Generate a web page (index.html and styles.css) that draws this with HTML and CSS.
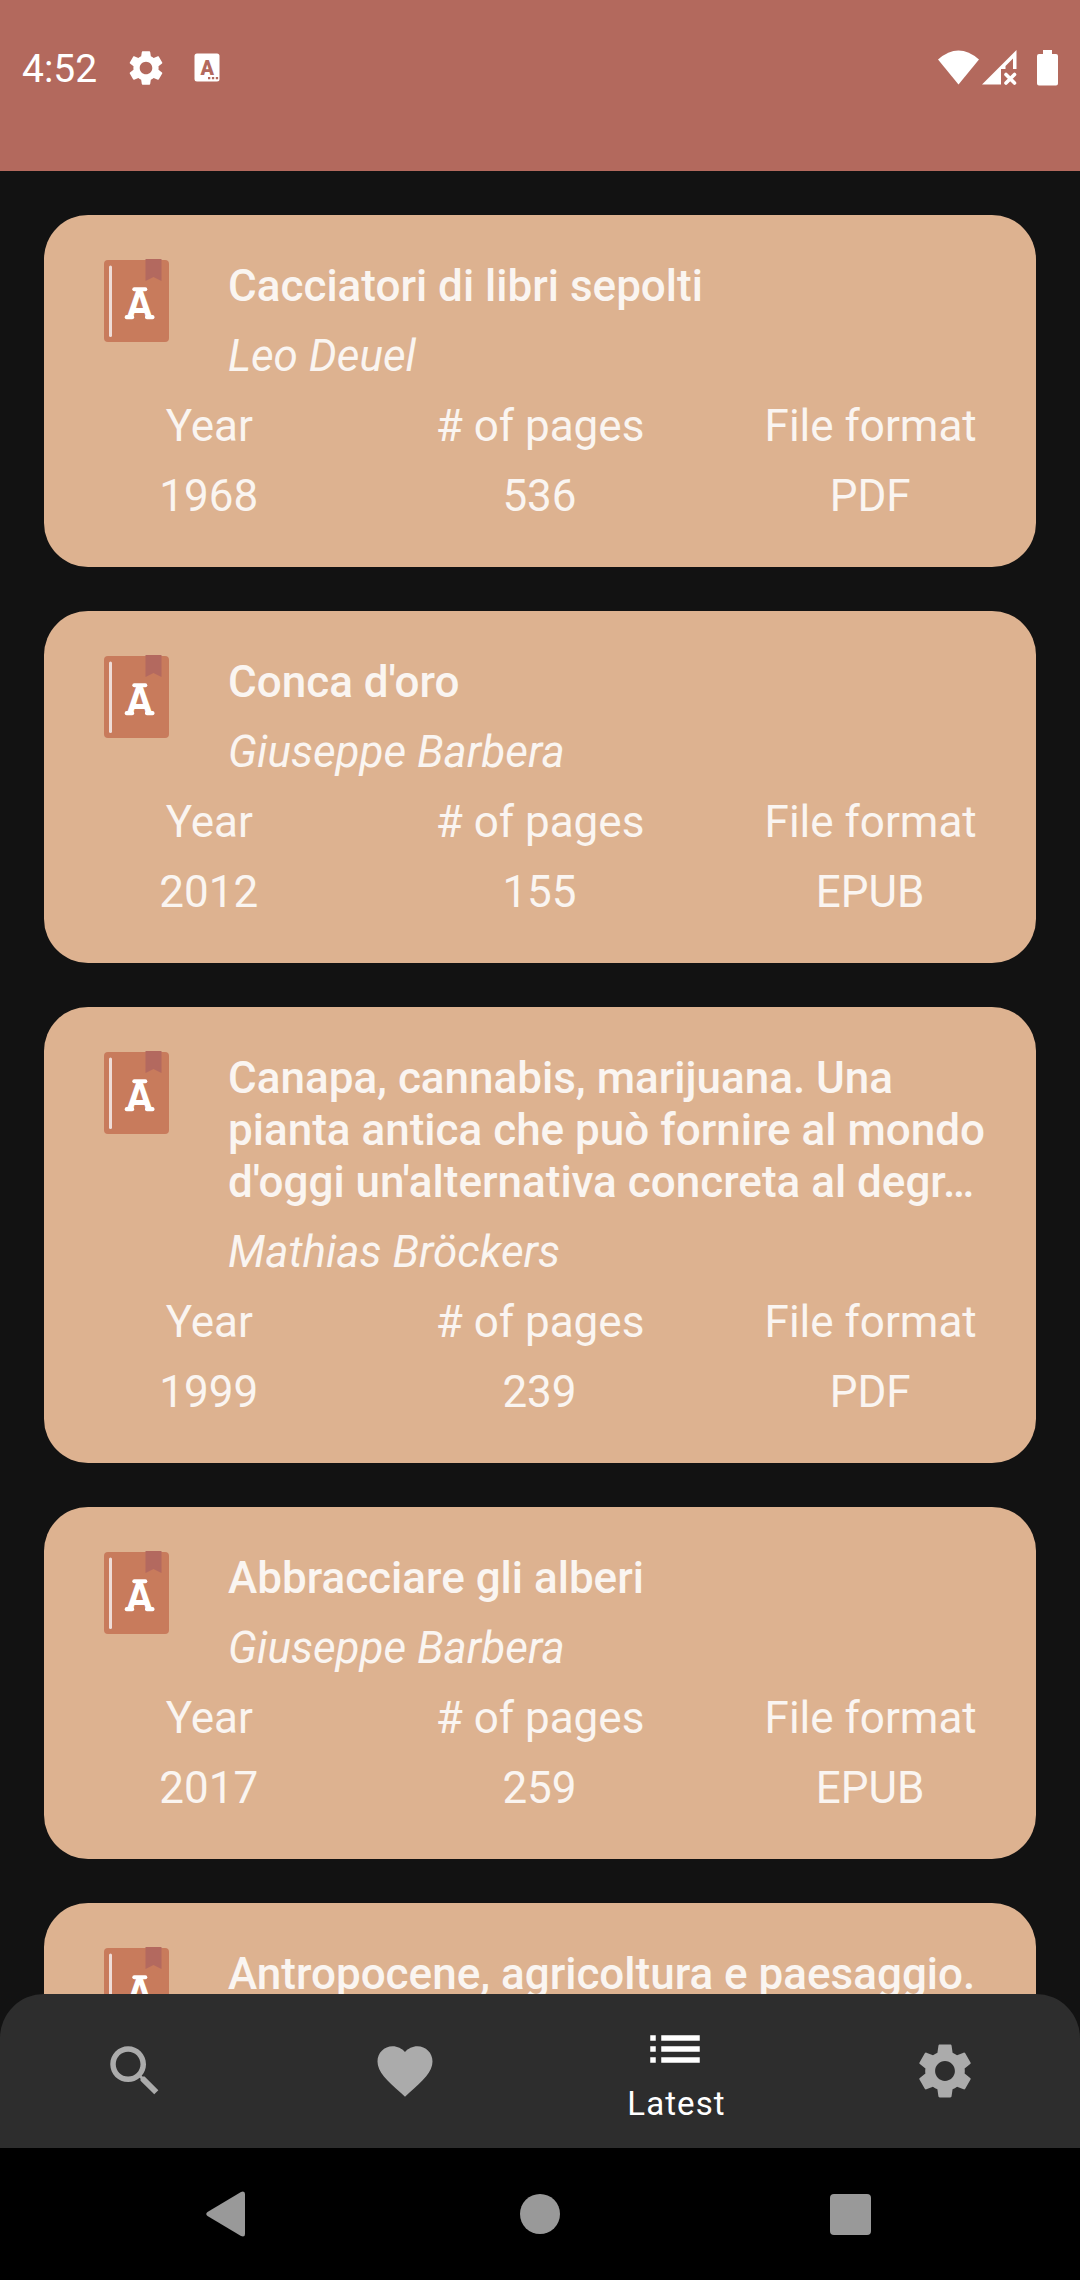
FILE: index.html
```html
<!DOCTYPE html>
<html lang="en">
<head>
<meta charset="utf-8">
<title>Latest</title>
<link rel="stylesheet" href="styles.css">
</head>
<body>
<svg width="0" height="0" class="defs">
  <symbol id="gear" viewBox="0 0 24 24"><path d="M19.14 12.94c.04-.3.06-.61.06-.94 0-.32-.02-.64-.07-.94l2.03-1.58c.18-.14.23-.41.12-.61l-1.92-3.32c-.12-.22-.37-.29-.59-.22l-2.39.96c-.5-.38-1.03-.7-1.62-.94l-.36-2.54c-.04-.24-.24-.41-.48-.41h-3.84c-.24 0-.43.17-.47.41l-.36 2.54c-.59.24-1.13.57-1.62.94l-2.39-.96c-.22-.08-.47 0-.59.22L2.74 8.87c-.12.21-.08.47.12.61l2.03 1.58c-.05.3-.09.63-.09.94s.02.64.07.94l-2.03 1.58c-.18.14-.23.41-.12.61l1.92 3.32c.12.22.37.29.59.22l2.39-.96c.5.38 1.03.7 1.62.94l.36 2.54c.05.24.24.41.48.41h3.84c.24 0 .44-.17.47-.41l.36-2.54c.59-.24 1.13-.56 1.62-.94l2.39.96c.22.08.47 0 .59-.22l1.92-3.32c.12-.22.07-.47-.12-.61l-2.01-1.58zM12 15.6c-1.98 0-3.6-1.62-3.6-3.6s1.62-3.6 3.6-3.6 3.6 1.62 3.6 3.6-1.62 3.6-3.6 3.6z"/></symbol>
  <symbol id="book" viewBox="0 0 66 86">
    <rect x="0" y="2" width="65" height="82" rx="4" fill="#c87b5c"/>
    <rect x="5" y="7.500" width="3" height="71.500" rx="1.500" fill="#efdcd7"/>
    <path d="M41.500 1h16v22l-8-4-8 4z" fill="#b3695f"/>
    <rect x="28.300" y="29.300" width="15" height="4" rx="2" fill="#fff"/>
    <rect x="20.700" y="57" width="9.500" height="4.300" rx="2" fill="#fff"/>
    <rect x="41" y="57" width="9.500" height="4.300" rx="2" fill="#fff"/>
  </symbol>
</svg>
<div class="screen">
  <header class="app-bar">
    <div class="status-left">
      <span class="clock">4:52</span>
      <svg class="status-gear" width="42" height="42"><use href="#gear"/></svg>
      <svg class="status-note" width="26" height="30" viewBox="0 0 26 30">
        <rect x="0.500" y="0.500" width="25" height="28" rx="2.500" fill="#fff"/>
        <text x="6.500" y="21.500" class="note-letter" textLength="13.500" lengthAdjust="spacingAndGlyphs">A</text>
        <path d="M14 24h2.300v2.300H14zM17.900 24h2.300v2.300h-2.300zM21.800 24h2.300v2.300h-2.300z" fill="#b3695d"/>
      </svg>
    </div>
    <div class="status-right">
      <svg width="41" height="35" viewBox="0 0 41 35"><path d="M0 9.500Q20.500-8.500 41 9.500L20.500 34.500z"/></svg>
      <svg class="signal" width="35" height="35" viewBox="0 0 35 35"><path d="M0 34.500 34.500 0v19h-3.500V8.500L23.500 16v3H19v15.500z"/><path class="cross" d="M24 24.500l8.500 8.500m0-8.500-8.500 8.500"/></svg>
      <svg class="battery" width="21" height="36" viewBox="0 0 21 36"><path d="M6 0h9v4h4a2 2 0 0 1 2 2v27.500a2 2 0 0 1-2 2H2a2 2 0 0 1-2-2V6a2 2 0 0 1 2-2h4z"/></svg>
    </div>
  </header>

  <main class="list">
    <article class="card">
      <div class="head"><div class="book"><svg width="66" height="86"><use href="#book"/></svg><span class="book-letter">A</span></div><div class="info"><h2>Cacciatori di libri sepolti</h2><p class="author">Leo Deuel</p></div></div>
      <dl class="facts"><div><dt>Year</dt><dd>1968</dd></div><div><dt># of pages</dt><dd>536</dd></div><div><dt>File format</dt><dd>PDF</dd></div></dl>
    </article>
    <article class="card">
      <div class="head"><div class="book"><svg width="66" height="86"><use href="#book"/></svg><span class="book-letter">A</span></div><div class="info"><h2>Conca d'oro</h2><p class="author">Giuseppe Barbera</p></div></div>
      <dl class="facts"><div><dt>Year</dt><dd>2012</dd></div><div><dt># of pages</dt><dd>155</dd></div><div><dt>File format</dt><dd>EPUB</dd></div></dl>
    </article>
    <article class="card">
      <div class="head"><div class="book"><svg width="66" height="86"><use href="#book"/></svg><span class="book-letter">A</span></div><div class="info"><h2>Canapa, cannabis, marijuana. Una pianta antica che può fornire al mondo d'oggi un'alternativa concreta al degr…</h2><p class="author">Mathias Bröckers</p></div></div>
      <dl class="facts"><div><dt>Year</dt><dd>1999</dd></div><div><dt># of pages</dt><dd>239</dd></div><div><dt>File format</dt><dd>PDF</dd></div></dl>
    </article>
    <article class="card">
      <div class="head"><div class="book"><svg width="66" height="86"><use href="#book"/></svg><span class="book-letter">A</span></div><div class="info"><h2>Abbracciare gli alberi</h2><p class="author">Giuseppe Barbera</p></div></div>
      <dl class="facts"><div><dt>Year</dt><dd>2017</dd></div><div><dt># of pages</dt><dd>259</dd></div><div><dt>File format</dt><dd>EPUB</dd></div></dl>
    </article>
    <article class="card">
      <div class="head"><div class="book"><svg width="66" height="86"><use href="#book"/></svg><span class="book-letter">A</span></div><div class="info"><h2>Antropocene, agricoltura e paesaggio.</h2></div></div>
    </article>
  </main>

  <nav class="tabs">
    <a class="tab"><svg width="66" height="66" viewBox="0 0 24 24"><path d="M15.500 14h-.79l-.28-.27C15.410 12.590 16 11.110 16 9.500 16 5.910 13.090 3 9.500 3S3 5.910 3 9.500 5.910 16 9.500 16c1.610 0 3.090-.59 4.230-1.570l.27.28v.79l5 4.990L20.490 19l-4.990-5zm-6 0C7.010 14 5 11.990 5 9.500S7.010 5 9.500 5 14 7.010 14 9.500 11.990 14 9.500 14z"/></svg></a>
    <a class="tab"><svg width="66" height="66" viewBox="0 0 24 24"><path d="M12 21.350l-1.450-1.320C5.400 15.360 2 12.280 2 8.500 2 5.420 4.420 3 7.500 3c1.740 0 3.410.81 4.500 2.090C13.090 3.810 14.760 3 16.500 3 19.580 3 22 5.420 22 8.500c0 3.780-3.400 6.860-8.550 11.540L12 21.350z"/></svg></a>
    <a class="tab active"><svg width="66" height="66" viewBox="0 0 24 24"><path d="M3 13h2v-2H3v2zm0 4h2v-2H3v2zm0-8h2V7H3v2zm4 4h14v-2H7v2zm0 4h14v-2H7v2zM7 7v2h14V7H7z"/></svg><span>Latest</span></a>
    <a class="tab"><svg width="66" height="66"><use href="#gear"/></svg></a>
  </nav>

  <footer class="system-bar">
    <svg width="40" height="46" viewBox="0 0 40 46"><path d="M1.500 21 35 .9Q39 -.5 39 3v40q0 3.500-4 2.100L1.500 25Q-1 23 1.500 21z"/></svg>
    <svg class="home" width="40" height="40" viewBox="0 0 40 40"><circle cx="20" cy="20" r="20"/></svg>
    <svg width="41" height="41" viewBox="0 0 41 41"><rect width="41" height="41" rx="4"/></svg>
  </footer>
</div>
</body>
</html>
```
FILE: styles.css
```css
* { box-sizing: border-box; margin: 0; padding: 0; }
body { background: #121212; font-family: Roboto, "Liberation Sans", sans-serif; }
svg { display: block; flex: none; }
.defs { position: absolute; }
.screen { width: 1080px; height: 2280px; display: flex; flex-direction: column; overflow: hidden; }

.app-bar { flex: none; height: 171px; padding: 0 22px; background: #b3695d; color: #fff; display: flex; justify-content: space-between; align-items: flex-start; }
.status-left, .status-right { height: 135px; display: flex; align-items: center; }
.status-left { gap: 27px; }
.clock { width: 76px; font-size: 39px; line-height: 45px; margin-top: 4px; }
.status-gear { fill: #fff; }
.note-letter { font: 900 20px Roboto, sans-serif; fill: #b3695d; }
.status-right svg { fill: #fff; }
.signal { margin-left: 3px; }
.status-right .cross { fill: none; stroke: #fff; stroke-width: 3.6; stroke-linecap: round; }
.battery { margin-left: 20px; }

.list { flex: 1; min-height: 0; padding: 44px 44px 0; display: flex; flex-direction: column; gap: 44px; margin-bottom: -44px; overflow: hidden; }
.card { flex: none; min-height: 352px; padding: 45px 0; border-radius: 44px; background: #ddb290; color: #faf5f1; font-size: 44px; line-height: 52px; }
.head { display: flex; padding-left: 60px; }
.book { position: relative; flex: none; width: 66px; height: 86px; margin: -2px 58px -32px 0; }
.book-letter { position: absolute; left: 20px; top: 21px; width: 31px; text-align: center; font-size: 43px; font-weight: 700; line-height: 50px; color: #fff; transform: scaleX(.92); }
.info { width: 764px; }
h2 { font-size: 44px; font-weight: 500; }
.author { margin-top: 18px; font-style: italic; }
.facts { display: grid; grid-template-columns: repeat(3, 1fr); margin-top: 18px; text-align: center; }
.facts dd { margin-top: 18px; padding-right: 1px; }

.tabs { flex: none; position: relative; height: 154px; background: #2d2d2d; border-radius: 44px 44px 0 0; display: grid; grid-template-columns: repeat(4, 1fr); }
.tab { display: flex; flex-direction: column; align-items: center; justify-content: center; fill: #ababab; }
.tab.active { justify-content: flex-start; padding-top: 22px; fill: #fff; color: #fff; font-size: 33px; line-height: 38px; letter-spacing: 1.1px; }
.tab.active span { margin-top: 3px; padding-left: 3px; }

.system-bar { flex: none; height: 132px; padding: 0 209px 0 206px; background: #000; display: flex; align-items: center; justify-content: space-between; fill: #999; }
.home { margin-left: 3px; }
```
